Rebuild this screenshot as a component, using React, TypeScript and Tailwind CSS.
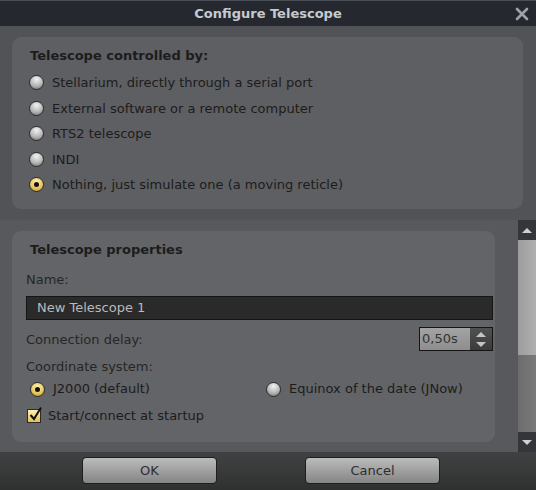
import React from "react"

const font = { fontFamily: '"DejaVu Sans", "Liberation Sans", sans-serif' }

function Radio({ checked }: { checked?: boolean }) {
  return (
    <span
      className={`relative inline-flex h-[15px] w-[15px] shrink-0 items-center justify-center rounded-full border border-[#2c2c2c] ${
        checked
          ? "bg-[radial-gradient(circle_at_50%_30%,#fff3b8,#e6c35a_60%,#b08a2c)]"
          : "bg-[radial-gradient(circle_at_50%_25%,#f2f2f2,#b8b8b8_55%,#6a6a6a)]"
      }`}
    >
      {checked && <span className="h-[5px] w-[5px] rounded-full bg-[#111]" />}
    </span>
  )
}

function RadioRow({ label, checked }: { label: string; checked?: boolean }) {
  return (
    <div className="flex h-[25.5px] items-center gap-[8px] pl-[17px]">
      <Radio checked={checked} />
      <span>{label}</span>
    </div>
  )
}

export default function App() {
  return (
    <div style={font} className="flex h-[490px] w-[536px] flex-col overflow-hidden bg-[#525356] text-[13px] text-[#1c1c1c]">
      <div className="relative flex h-[26px] shrink-0 items-center justify-center border-t border-[#4a4f57] bg-[#25292f]">
        <span className="font-bold text-[#c6cad0]">Configure Telescope</span>
        <svg className="absolute right-[7px] top-[6px]" width="14" height="14" viewBox="0 0 14 14">
          <path d="M2 2 L12 12 M12 2 L2 12" stroke="#9ea2a8" strokeWidth="2.6" strokeLinecap="round" />
        </svg>
      </div>

      <div className="h-[194px] shrink-0 bg-[#525356] px-[12px] pt-[11px] pr-[13px]">
        <div className="h-[172px] rounded-[9px] bg-[#5e5f62] pt-[10px]">
          <div className="pl-[18px] font-bold leading-[18px]">Telescope controlled by:</div>
          <div className="mt-[5px]">
            <RadioRow label="Stellarium, directly through a serial port" />
            <RadioRow label="External software or a remote computer" />
            <RadioRow label="RTS2 telescope" />
            <RadioRow label="INDI" />
            <RadioRow label="Nothing, just simulate one (a moving reticle)" checked />
          </div>
        </div>
      </div>

      <div className="flex h-[232px] shrink-0 bg-[#58595c]">
        <div className="flex-1 pl-[12px] pr-[23px] pt-[11px]">
          <div className="h-[211px] rounded-[9px] bg-[#636467] pl-[14px] pr-[2px] pt-[10px]">
            <div className="pl-[4px] font-bold leading-[18px]">Telescope properties</div>
            <div className="mt-[12px] leading-[18px] text-[#262626]">Name:</div>
            <div className="mt-[7px] flex h-[24px] items-center border border-[#151515] bg-[#2a2a2a] pl-[10px] text-[#b9b9b9]">
              New Telescope 1
            </div>
            <div className="mt-[7px] flex h-[24px] items-center justify-between text-[#262626]">
              <span className="pt-[2px]">Connection delay:</span>
              <div className="flex h-[24px] w-[74px] border border-[#151515]">
                <div className="flex flex-1 items-center bg-gradient-to-b from-[#a3a3a3] to-[#8e8e8e] pl-[2px] text-[#333]">0,50s</div>
                <div className="flex w-[22px] flex-col items-center justify-center gap-[5px] bg-gradient-to-b from-[#505050] to-[#3c3c3c]">
                  <svg width="10" height="5" viewBox="0 0 10 5"><path d="M0 5 L5 0 L10 5Z" fill="#c4c4c4" /></svg>
                  <svg width="10" height="5" viewBox="0 0 10 5"><path d="M0 0 L5 5 L10 0Z" fill="#c4c4c4" /></svg>
                </div>
              </div>
            </div>
            <div className="mt-[7px] leading-[18px] text-[#262626]">Coordinate system:</div>
            <div className="mt-[1px] flex h-[24px] items-center">
              <div className="flex w-[240px] items-center gap-[8px] pl-[4px]">
                <Radio checked />
                <span>J2000 (default)</span>
              </div>
              <div className="flex items-center gap-[8px]">
                <Radio />
                <span>Equinox of the date (JNow)</span>
              </div>
            </div>
            <div className="mt-[6px] flex h-[18px] items-center gap-[7px] pl-[1px]">
              <span className="relative h-[14px] w-[14px] border border-[#2a2a2a] bg-gradient-to-b from-[#fff0b0] to-[#e3c059]">
                <svg className="absolute -top-[4px] left-[0px]" width="16" height="16" viewBox="0 0 16 16">
                  <path d="M2.5 9 L6 13 L13 1.5" stroke="#111" strokeWidth="2" fill="none" />
                </svg>
              </span>
              <span>Start/connect at startup</span>
            </div>
          </div>
        </div>
        <div className="flex w-[18px] flex-col bg-[#3a3b3d]">
          <div className="flex h-[20px] items-center justify-center bg-[#35363a]">
            <svg width="10" height="5" viewBox="0 0 10 5"><path d="M0 5 L5 0 L10 5Z" fill="#d0d0d0" /></svg>
          </div>
          <div className="h-[115px] bg-gradient-to-r from-[#9c9c9c] to-[#b0b0b0]" />
          <div className="flex-1 bg-gradient-to-r from-[#6c6c6c] to-[#7a7a7a]" />
          <div className="flex h-[20px] items-center justify-center bg-[#35363a]">
            <svg width="10" height="5" viewBox="0 0 10 5"><path d="M0 0 L5 5 L10 0Z" fill="#d0d0d0" /></svg>
          </div>
        </div>
      </div>

      <div className="flex flex-1 items-start bg-[linear-gradient(180deg,#404142,#3a3b3b_40%,#2f3030)] pt-[5px]">
        <button className="ml-[82px] h-[27px] w-[135px] rounded-[4px] border border-[#1e1e1e] bg-gradient-to-b from-[#bcbcbc] to-[#858585] text-[#2e2e2e]">
          OK
        </button>
        <button className="ml-[88px] h-[27px] w-[135px] rounded-[4px] border border-[#1e1e1e] bg-gradient-to-b from-[#bcbcbc] to-[#858585] text-[#2e2e2e]">
          Cancel
        </button>
      </div>
    </div>
  )
}
